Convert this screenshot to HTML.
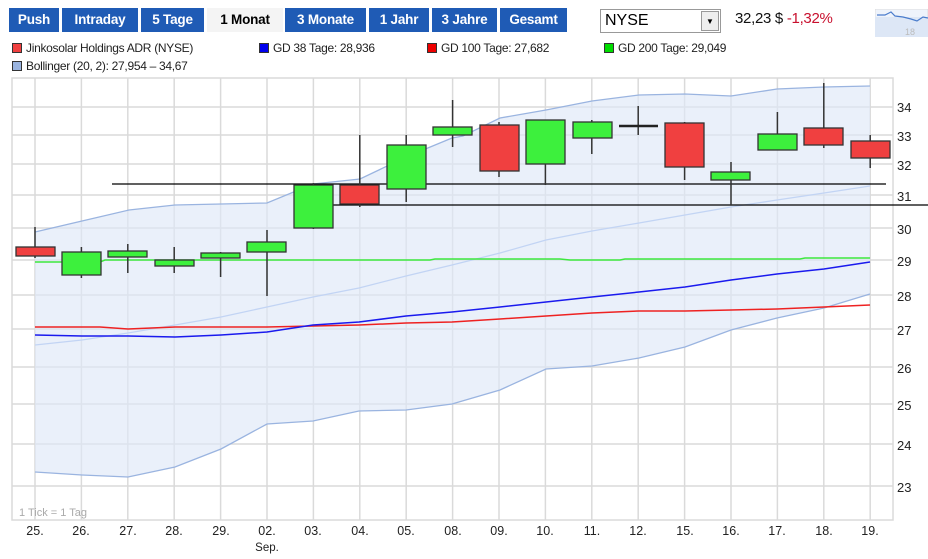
<!DOCTYPE html>
<html><head><meta charset="utf-8"><style>
body{margin:0;width:928px;height:559px;background:#fff;font-family:"Liberation Sans",Arial,sans-serif;position:relative;overflow:hidden}
.b{position:absolute;top:8px;height:24px;line-height:24px;background:#1f5bb5;color:#fff;font-weight:bold;font-size:13.5px;text-align:center;letter-spacing:-0.2px}
.b.a{background:#f4f4f4;color:#000}
.lg{position:absolute;font-size:12px;color:#222;white-space:nowrap;letter-spacing:-0.3px}
.sq{display:inline-block;width:8px;height:8px;border:1px solid #333;margin-right:4px;vertical-align:-1px}
</style></head><body>
<div class="b" style="left:9px;width:50px">Push</div>
<div class="b" style="left:62px;width:76px">Intraday</div>
<div class="b" style="left:141px;width:63px">5 Tage</div>
<div class="b a" style="left:207px;width:76px">1 Monat</div>
<div class="b" style="left:285px;width:81px">3 Monate</div>
<div class="b" style="left:369px;width:60px">1 Jahr</div>
<div class="b" style="left:432px;width:65px">3 Jahre</div>
<div class="b" style="left:500px;width:67px">Gesamt</div>
<div style="position:absolute;left:600px;top:9px;width:115px;height:22px;border:1px solid #999;font-size:16px;line-height:22px;padding-left:4px;box-sizing:content-box">NYSE
<div style="position:absolute;right:1px;top:1px;width:18px;height:20px;background:#eee;border:1px solid #999;box-sizing:border-box;font-size:8px;text-align:center;line-height:19px">▼</div></div>
<div style="position:absolute;left:735px;top:10px;font-size:15px;color:#111;letter-spacing:-0.3px">32,23 $ <span style="color:#c8102e">-1,32%</span></div>
<svg style="position:absolute;left:875px;top:9px" width="53" height="28"><rect width="53" height="28" fill="#eef3fb" stroke="#ddd"/><rect x="0" y="8" width="53" height="20" fill="#dde7f6"/><polyline points="2,6 10,6 16,3 20,7 28,8 36,10 42,12 48,8 53,9" fill="none" stroke="#4a7ccc" stroke-width="1.2"/><text x="30" y="26" font-size="9" fill="#bbb" font-family="Liberation Sans">18</text></svg>
<div class="lg" style="left:12px;top:41px"><span class="sq" style="background:#f04040"></span>Jinkosolar Holdings ADR (NYSE)</div>
<div class="lg" style="left:259px;top:41px"><span class="sq" style="background:#0000ee"></span>GD 38 Tage: 28,936</div>
<div class="lg" style="left:427px;top:41px"><span class="sq" style="background:#ee0000"></span>GD 100 Tage: 27,682</div>
<div class="lg" style="left:604px;top:41px"><span class="sq" style="background:#00dd00"></span>GD 200 Tage: 29,049</div>
<div class="lg" style="left:12px;top:59px"><span class="sq" style="background:#9ab4e0"></span>Bollinger (20, 2): 27,954 – 34,67</div>
<svg style="position:absolute;left:0;top:0" width="928" height="559" font-family="Liberation Sans,Arial,sans-serif">
<g stroke="#dadada" stroke-width="1.5" fill="none">
<rect x="12" y="78" width="881" height="442"/>
<path d="M12 107H893M12 135H893M12 164H893M12 195H893M12 228H893M12 260H893M12 295H893M12 329H893M12 367H893M12 404H893M12 444H893M12 486H893"/>
<path d="M35 78V520M81.4 78V520M127.8 78V520M174.2 78V520M220.6 78V520M267 78V520M313.4 78V520M359.8 78V520M406.2 78V520M452.6 78V520M499 78V520M545.4 78V520M591.8 78V520M638.2 78V520M684.6 78V520M731 78V520M777.4 78V520M823.8 78V520M870.2 78V520"/>
</g>
<polygon fill="#dfe8f8" fill-opacity="0.65" points="35,232 82,221 129,210 175,205 221,204 267,203 313,184 360,179 406,157 452,138 463,136 500,118 546,110 592,101 639,95 685,94 731,96 777,89 824,87 870,86 870,294 824,308 777,318 731,330 685,347 639,358 592,366 546,369 500,390 452,404 406,410 359,411 313,421 267,424 221,449 175,467 128,477 82,475 35,472"/>
<polyline fill="none" stroke="#9ab4e0" stroke-width="1.3" points="35,232 82,221 129,210 175,205 221,204 267,203 313,184 360,179 406,157 452,138 463,136 500,118 546,110 592,101 639,95 685,94 731,96 777,89 824,87 870,86"/>
<polyline fill="none" stroke="#9ab4e0" stroke-width="1.3" points="35,472 82,475 128,477 175,467 221,449 267,424 313,421 359,411 406,410 452,404 500,390 546,369 592,366 639,358 685,347 731,330 777,318 824,308 870,294"/>
<polyline fill="none" stroke="#c2d4f4" stroke-width="1.3" points="35,345 82,340 128,333 175,325 221,317 267,307 313,297 359,288 406,276 452,265 500,253 546,240 592,231 639,223 685,215 731,207 777,200 824,193 870,186"/>
<polyline fill="none" stroke="#3de83d" stroke-width="1.5" points="35,262 100,262 105,260 430,260 435,259 560,259 570,260 620,260 625,259 800,259 805,258 870,258"/>
<polyline fill="none" stroke="#ee2222" stroke-width="1.5" points="35,327 100,327 128,329 175,327 267,327 313,326 359,325 406,323 452,322 500,319 546,316 592,313 639,311 685,311 731,310 777,309 824,307 870,305"/>
<polyline fill="none" stroke="#1a1aee" stroke-width="1.5" points="35,335 82,336 128,336 175,337 221,335 267,332 313,325 359,322 406,316 452,312 500,307 546,302 592,297 639,292 685,287 731,280 777,274 824,269 870,262"/>
<path d="M112 184H886M333 205H928" stroke="#000" stroke-width="1.2"/>
<g stroke="#333" stroke-width="1.5">
<path d="M35 227V258M81.4 247V278M127.8 244V273M174.2 247V273M220.6 252V277M267 230V296M313.4 183V229M359.8 135V207M406.2 135V202M452.6 100V147M499 122V177M545.4 120V185M591.8 120V154M638.2 106V135M684.6 122V180M731 162V205M777.4 112V150M823.8 83V148M870.2 135V168"/>
</g>
<g stroke="#333" stroke-width="1.3">
<rect x="16" y="247" width="39" height="9" fill="#f04040"/>
<rect x="62" y="252" width="39" height="23" fill="#3df03d"/>
<rect x="108" y="251" width="39" height="6" fill="#3df03d"/>
<rect x="155" y="260" width="39" height="6" fill="#3df03d"/>
<rect x="201" y="253" width="39" height="5" fill="#3df03d"/>
<rect x="247" y="242" width="39" height="10" fill="#3df03d"/>
<rect x="294" y="185" width="39" height="43" fill="#3df03d"/>
<rect x="340" y="185" width="39" height="19" fill="#f04040"/>
<rect x="387" y="145" width="39" height="44" fill="#3df03d"/>
<rect x="433" y="127" width="39" height="8" fill="#3df03d"/>
<rect x="480" y="125" width="39" height="46" fill="#f04040"/>
<rect x="526" y="120" width="39" height="44" fill="#3df03d"/>
<rect x="573" y="122" width="39" height="16" fill="#3df03d"/>
<rect x="665" y="123" width="39" height="44" fill="#f04040"/>
<rect x="711" y="172" width="39" height="8" fill="#3df03d"/>
<rect x="758" y="134" width="39" height="16" fill="#3df03d"/>
<rect x="804" y="128" width="39" height="17" fill="#f04040"/>
<rect x="851" y="141" width="39" height="17" fill="#f04040"/>
</g>
<path d="M619 126H658" stroke="#222" stroke-width="2.5"/>
<g font-size="13" fill="#222">
<text x="897" y="112">34</text><text x="897" y="141">33</text><text x="897" y="170">32</text><text x="897" y="201">31</text><text x="897" y="234">30</text><text x="897" y="266">29</text><text x="897" y="301">28</text><text x="897" y="335">27</text><text x="897" y="373">26</text><text x="897" y="410">25</text><text x="897" y="450">24</text><text x="897" y="492">23</text>
</g>
<g font-size="12.5" fill="#222" text-anchor="middle">
<text x="35" y="535">25.</text><text x="81" y="535">26.</text><text x="128" y="535">27.</text><text x="174" y="535">28.</text><text x="221" y="535">29.</text><text x="267" y="535">02.</text><text x="313" y="535">03.</text><text x="360" y="535">04.</text><text x="406" y="535">05.</text><text x="453" y="535">08.</text><text x="499" y="535">09.</text><text x="545" y="535">10.</text><text x="592" y="535">11.</text><text x="638" y="535">12.</text><text x="685" y="535">15.</text><text x="731" y="535">16.</text><text x="777" y="535">17.</text><text x="824" y="535">18.</text><text x="870" y="535">19.</text>
<text x="267" y="551" font-size="11.5">Sep.</text>
</g>
<text x="19" y="516" font-size="11" fill="#aaa">1 Tick = 1 Tag</text>
</svg>
</body></html>
